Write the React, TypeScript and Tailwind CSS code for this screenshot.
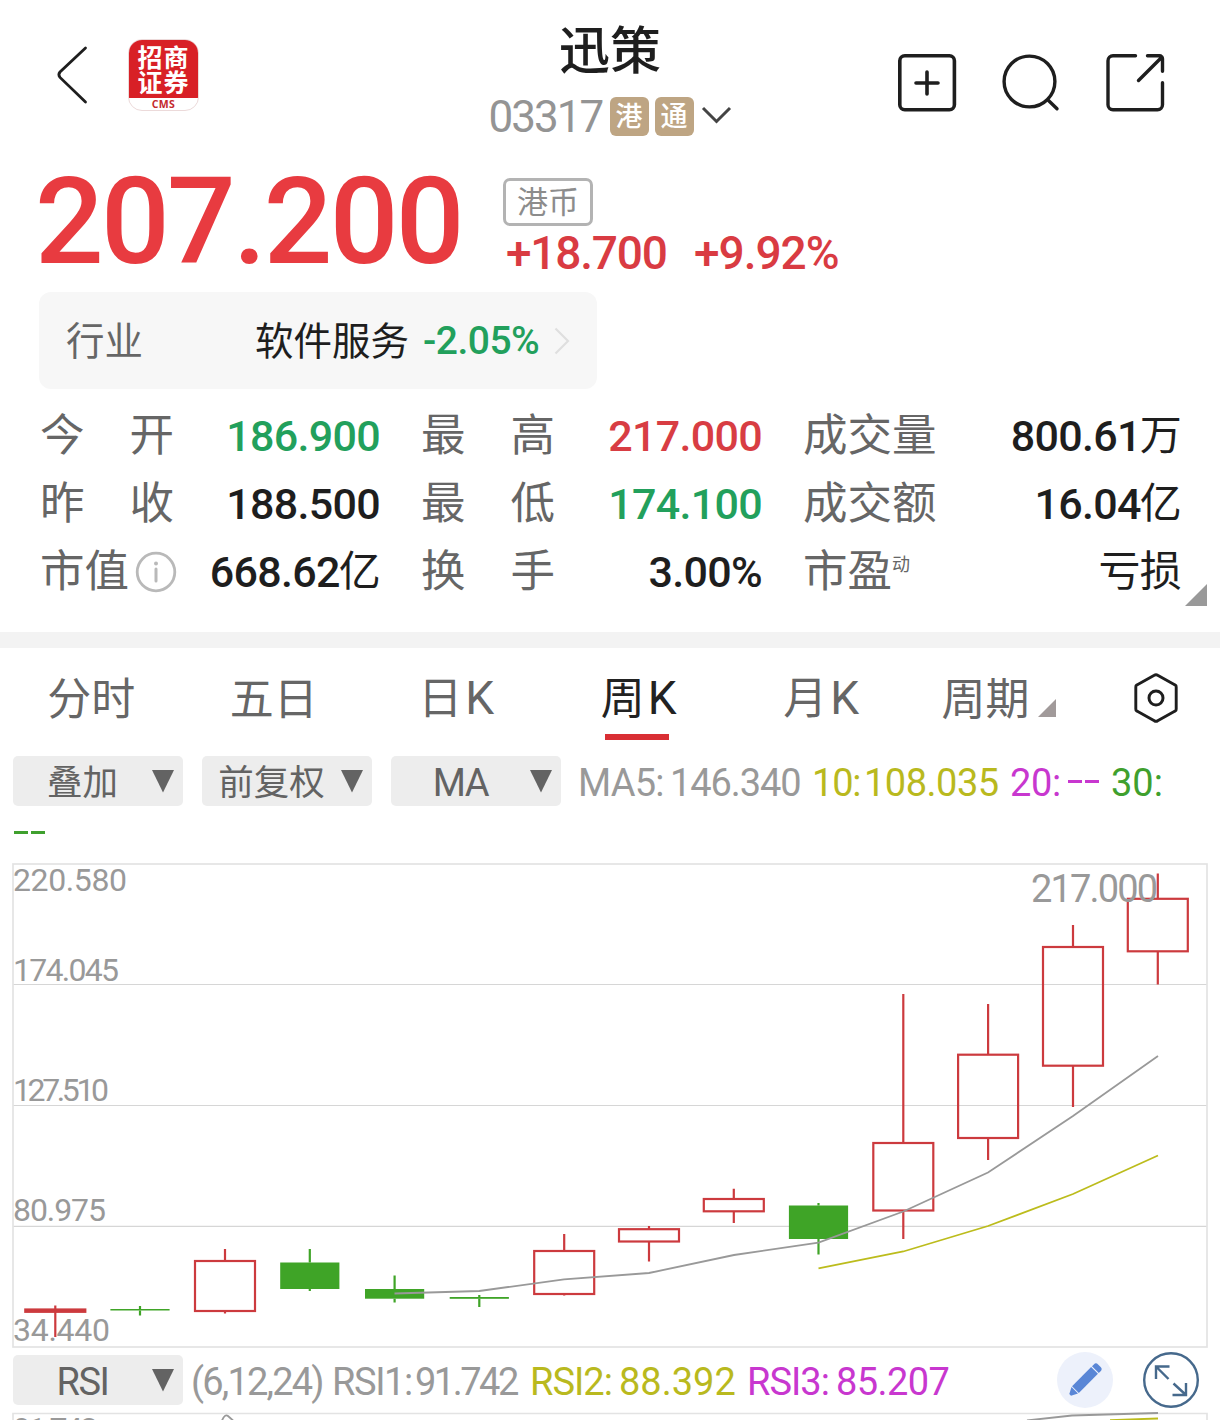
import type { ReactNode } from "react";

type Tone = "up" | "down" | "plain";

type Stat = {
  label: string;
  value: string;
  unit?: string;
  tone: Tone;
  spread?: boolean;
  info?: boolean;
  sup?: string;
};

type Candle = {
  x: number;
  high: number;
  top: number;
  bottom: number;
  low: number;
  up: boolean;
};

const stats: Stat[] = [
  { label: "今开", value: "186.900", tone: "down", spread: true },
  { label: "最高", value: "217.000", tone: "up", spread: true },
  { label: "成交量", value: "800.61", unit: "万", tone: "plain" },
  { label: "昨收", value: "188.500", tone: "plain", spread: true },
  { label: "最低", value: "174.100", tone: "down", spread: true },
  { label: "成交额", value: "16.04", unit: "亿", tone: "plain" },
  { label: "市值", value: "668.62", unit: "亿", tone: "plain", info: true },
  { label: "换手", value: "3.00%", tone: "plain", spread: true },
  { label: "市盈", value: "", unit: "亏损", tone: "plain", sup: "动" },
];

const toneClass: Record<Tone, string> = {
  up: "text-[#d83d43]",
  down: "text-[#22a05c]",
  plain: "text-[#1e1e1e]",
};

const tabs = ["分时", "五日", "日K", "周K", "月K"];

const candles: Candle[] = [
  { x: 55.3, high: 1305.5, top: 1309.5, bottom: 1311.8, low: 1337, up: true },
  { x: 140, high: 1306, top: 1309, bottom: 1310.5, low: 1315.5, up: false },
  { x: 225, high: 1249, top: 1261, bottom: 1311, low: 1313.5, up: true },
  { x: 309.8, high: 1249, top: 1262.5, bottom: 1289, low: 1291, up: false },
  { x: 394.6, high: 1275.5, top: 1289, bottom: 1298.7, low: 1302.5, up: false },
  { x: 479.3, high: 1295, top: 1297, bottom: 1298.8, low: 1307, up: false },
  { x: 564.2, high: 1234, top: 1251, bottom: 1294, low: 1295.5, up: true },
  { x: 649, high: 1226, top: 1229.2, bottom: 1241.5, low: 1261.5, up: true },
  { x: 733.8, high: 1188.7, top: 1199, bottom: 1211.3, low: 1223, up: true },
  { x: 818.5, high: 1203, top: 1205.5, bottom: 1239, low: 1254.5, up: false },
  { x: 903.3, high: 994, top: 1143, bottom: 1210.5, low: 1239, up: true },
  { x: 988.1, high: 1004, top: 1054.7, bottom: 1138, low: 1160, up: true },
  { x: 1073, high: 925, top: 947, bottom: 1065.7, low: 1107, up: true },
  { x: 1157.8, high: 873.5, top: 898.8, bottom: 951.3, low: 984.5, up: true },
];

const ma5 =
  "394.5,1293.5 479.3,1291 564,1279.3 649,1273 734,1255 818.5,1242.7 903.3,1211.5 988,1172.5 1073,1116 1158,1056";
const ma10 = "818.5,1268.3 903.3,1251.5 988,1226 1073,1194 1158,1155.5";

const axis = [
  { label: "220.580", y: 891, width: 114 },
  { label: "174.045", y: 981, width: 106 },
  { label: "127.510", y: 1101, width: 96 },
  { label: "80.975", y: 1221, width: 93 },
  { label: "34.440", y: 1341, width: 97 },
];

function BackIcon() {
  return (
    <svg width="34" height="62" viewBox="55 44 34 62" fill="none">
      <path
        d="M85.5 48 60 72q-2.2 2.7 0 5.4L85.5 102"
        stroke="#1e1e1e"
        strokeWidth="2.8"
        strokeLinecap="round"
      />
    </svg>
  );
}

function BrokerLogo() {
  return (
    <div className="flex h-[72px] w-[71px] flex-col overflow-hidden rounded-[14px] border border-[#ecdada] bg-white">
      <div className="flex h-[58px] flex-col items-center justify-center bg-[#d82026] font-['Noto_Sans_CJK_SC',sans-serif] text-[25px] leading-[25px] font-bold tracking-[1px] text-white">
        <span className="h-[25px]">招商</span>
        <span className="h-[25px]">证券</span>
      </div>
      <div className="text-center font-['Open_Sans',sans-serif] text-[10.5px] leading-[12px] font-bold tracking-[0.3px] text-[#c42a2e]">
        CMS
      </div>
    </div>
  );
}

function AddIcon() {
  return (
    <svg width="60" height="60" viewBox="897 53 60 60" fill="none" stroke="#1e1e1e">
      <rect x="899.8" y="55.8" width="54.6" height="54" rx="5" strokeWidth="3.6" />
      <path d="M916 83h22M927 72v22" strokeWidth="3.6" strokeLinecap="round" />
    </svg>
  );
}

function SearchIcon() {
  return (
    <svg width="60" height="60" viewBox="1001 53 60 60" fill="none" stroke="#1e1e1e">
      <circle cx="1029.5" cy="81.5" r="25.4" strokeWidth="3.4" />
      <path d="m1048.5 100.5 8.5 8.2" strokeWidth="3.4" strokeLinecap="round" />
    </svg>
  );
}

function ShareIcon() {
  return (
    <svg
      width="60"
      height="60"
      viewBox="1105 53 60 60"
      fill="none"
      stroke="#1e1e1e"
      strokeWidth="3.4"
      strokeLinecap="round"
    >
      <path d="M1135.5 55.8h-22.5a5 5 0 0 0-5 5v44a5 5 0 0 0 5 5h44.5a5 5 0 0 0 5-5v-22" />
      <path d="M1147.5 55.8h12a3 3 0 0 1 3 3v12.5M1162 57l-23.5 23.5" />
    </svg>
  );
}

function Hexagon() {
  return (
    <svg width="48" height="52" viewBox="0 0 48 52" fill="none" stroke="#1e1e1e">
      <path
        d="M22.3 3.3 4.9 12.9a2 2 0 0 0-1.1 2v22.2a2 2 0 0 0 1.1 2l17.4 9.6a3 3 0 0 0 3.4 0l17.4-9.6a2 2 0 0 0 1.1-2V14.9a2 2 0 0 0-1.1-2L25.7 3.3a3 3 0 0 0-3.4 0Z"
        strokeWidth="2.9"
      />
      <circle cx="24" cy="26" r="7" strokeWidth="3" />
    </svg>
  );
}

function InfoIcon() {
  return (
    <svg width="42" height="42" viewBox="0 0 42 42" fill="none" stroke="#b9b9b9">
      <circle cx="21" cy="21" r="18.8" strokeWidth="2.8" />
      <path d="M21 18v12" strokeWidth="3" strokeLinecap="round" />
      <circle cx="21" cy="12.5" r="2" fill="#b9b9b9" stroke="none" />
    </svg>
  );
}

function DownArrow() {
  return (
    <svg width="22" height="23" viewBox="0 0 22 23">
      <path d="M0 0h22L11 22.5Z" fill="#636363" />
    </svg>
  );
}

function Corner({ className, fill }: { className: string; fill: string }) {
  return (
    <svg className={className} viewBox="0 0 20 20" preserveAspectRatio="none">
      <path d="M20 0v20H0Z" fill={fill} />
    </svg>
  );
}

function PencilIcon() {
  return (
    <svg width="56" height="56" viewBox="0 0 56 56">
      <circle cx="28" cy="28" r="28" fill="#edf1fb" />
      <g transform="translate(27.500 28.500) rotate(45)" fill="#5986d6">
        <path d="M-4.800-18a3 3 0 0 1 3-3h3.600a3 3 0 0 1 3 3v2.600h-9.600Z" />
        <path d="M-4.800-14.200h9.600v27h-9.600Z" />
        <path d="M-4.600 13.800h9.200L1.200 20.300h-2.400Z" />
      </g>
    </svg>
  );
}

function ExpandIcon() {
  return (
    <svg width="56" height="56" viewBox="0 0 56 56" fill="none" stroke="#46698c" strokeWidth="2.4">
      <circle cx="28" cy="28" r="26.8" />
      <path d="M26.5 14.5H13V27M13 14.5l12.500 12.500M30.500 31.500 43 43M43 31v12H29.500" />
    </svg>
  );
}

function Chip({ children }: { children: ReactNode }) {
  return (
    <button
      type="button"
      className="flex h-[50px] w-[170px] shrink-0 items-center rounded-[5px] bg-[#ededed] text-[#636363]"
    >
      <span className="w-[139px] pt-[4px] text-center">{children}</span>
      <DownArrow />
    </button>
  );
}

function CandleShape({ x, high, top, bottom, low, up }: Candle) {
  const color = up ? "#cc3a3e" : "#3fa427";
  // a hollow body thinner than its own outline is drawn solid
  const solid = bottom - top < 3;
  return (
    <g stroke={color} strokeWidth="2.2">
      <path d={`M${x} ${high}V${top}M${x} ${bottom}V${low}`} />
      {up ? (
        <rect x={x - 30} y={top} width="60" height={bottom - top} fill={solid ? color : "none"} />
      ) : (
        <rect x={x - 29.6} y={top} width="59.2" height={bottom - top} fill={color} stroke="none" />
      )}
    </g>
  );
}

function Header() {
  return (
    <header className="flex h-[150px] items-start justify-between pr-[55px] pl-[55px]">
      <div className="flex w-[300px] items-center gap-[39px] pt-[39px]">
        <BackIcon />
        <BrokerLogo />
      </div>
      <div className="flex flex-col items-center">
        <h1 className="mt-[22px] h-[60px] text-[51px] leading-[60px] font-medium text-[#1e1e1e]">
          迅策
        </h1>
        <div className="mt-[14px] flex h-[40px] items-center">
          <span className="w-[121px] pt-[2px] text-[44px] leading-[40px] tracking-[-2px] text-[#949494]">
            03317
          </span>
          <span className="flex h-[39px] w-[39px] items-center justify-center rounded-[6px] bg-[#bea583] pt-[2px] text-[27px] leading-[37px] font-medium text-white">
            港
          </span>
          <span className="ml-[6px] flex h-[39px] w-[39px] items-center justify-center rounded-[6px] bg-[#bea583] pt-[2px] text-[27px] leading-[37px] font-medium text-white">
            通
          </span>
          <svg className="ml-[7px]" width="31" height="20" viewBox="0 0 31 20" fill="none">
            <path d="m2 2 13.500 13.500L29 2" stroke="#444" strokeWidth="3" />
          </svg>
        </div>
      </div>
      <div className="flex w-[300px] justify-end gap-[44px] pt-[53px]">
        <AddIcon />
        <SearchIcon />
        <ShareIcon />
      </div>
    </header>
  );
}

function Quote() {
  return (
    <section className="flex h-[142px] pl-[35px]">
      <div className="w-[468px] pt-[1px] text-[121px] leading-[142px] font-medium tracking-[-2.800px] text-[#e83b40]">
        207.200
      </div>
      <div className="pt-[28px]">
        <div className="flex h-[48px] w-[90px] items-center justify-center rounded-[7px] border-[3px] border-[#b3b3b3] pt-[2px] text-[31px] leading-[40px] text-[#8c8c8c]">
          港币
        </div>
        <div className="flex h-[54px] items-center pl-[3px] text-[46px] leading-[54px] font-medium tracking-[-1.200px] text-[#d93b42]">
          <span className="w-[188px]">+18.700</span>
          <span className="tracking-[-1px]">+9.92%</span>
        </div>
      </div>
    </section>
  );
}

function Industry() {
  return (
    <section className="ml-[39px] flex h-[97px] w-[558px] items-center rounded-[12px] bg-[#f7f7f7] pl-[27px] text-[38.5px]">
      <span className="w-[189px] pt-[2px] text-[#666]">行业</span>
      <span className="w-[168px] pt-[2px] text-[#1e1e1e]">软件服务</span>
      <span className="w-[131px] pt-[1px] text-[39px] font-medium tracking-[-0.500px] text-[#22a05c]">
        -2.05%
      </span>
      <svg width="16" height="28" viewBox="0 0 16 28" fill="none">
        <path d="m1.500 1.500 12.500 12.500L1.500 26.500" stroke="#dfdfdf" strokeWidth="2.200" />
      </svg>
    </section>
  );
}

function Stats() {
  return (
    <section className="relative mt-[13px] h-[230px]">
      <div className="grid grid-cols-[340px_341px_378px] gap-x-[41px] pl-[40px]">
        {stats.map((stat) => (
          <div key={stat.label} className="flex h-[68px] items-center justify-between">
            <div
              className={`flex items-center text-[44.5px] leading-[68px] text-[#666] ${
                stat.spread ? "w-[134px] justify-between" : ""
              }`}
            >
              {stat.spread ? (
                stat.label.split("").map((char) => <span key={char}>{char}</span>)
              ) : (
                <span>{stat.label}</span>
              )}
              {stat.info && (
                <span className="ml-[6px]">
                  <InfoIcon />
                </span>
              )}
              {stat.sup && <span className="mb-[14px] text-[18px] leading-[20px]">{stat.sup}</span>}
            </div>
            <div
              className={`flex items-center text-[43px] leading-[68px] tracking-[-0.700px] ${
                toneClass[stat.tone]
              }`}
            >
              {stat.value && <span className="font-medium">{stat.value}</span>}
              {stat.unit && <span className="ml-[-1px] text-[42px]">{stat.unit}</span>}
            </div>
          </div>
        ))}
      </div>
      <Corner className="absolute top-[182px] right-[13px] h-[22px] w-[22px]" fill="#999" />
    </section>
  );
}

function Tabs() {
  return (
    <nav className="flex h-[108px] text-[44px] text-[#666]">
      {tabs.map((tab) => {
        const active = tab === "周K";
        const hasK = tab.endsWith("K");
        return (
          <button
            key={tab}
            type="button"
            className={`flex w-[182.5px] flex-col items-center ${active ? "text-[#222]" : ""}`}
          >
            <span className={`h-[70px] leading-[68px] ${hasK ? "mt-[16px]" : "mt-[17.500px]"}`}>
              {tab.replace("K", "")}
              {hasK && <span className="ml-[3px] text-[46px]">K</span>}
            </span>
            {active && <span className="-ml-[4px] h-[6px] w-[64px] bg-[#d92f34]" />}
          </button>
        );
      })}
      <button type="button" className="mt-[18px] ml-[29px] flex h-[68px] w-[190px] items-center">
        周期
        <Corner className="mt-[16px] ml-[8px] h-[18px] w-[18px]" fill="#a19a9a" />
      </button>
      <button type="button" className="mt-[24px] h-[52px]">
        <Hexagon />
      </button>
    </nav>
  );
}

function MaRow() {
  return (
    <section className="h-[100px] pl-[13px] text-[38px] leading-[50px]">
      <div className="flex h-[50px] items-center">
        <div className="flex gap-[19px] text-[35.5px]">
          <Chip>叠加</Chip>
          <Chip>前复权</Chip>
          <Chip>
            <span className="text-[38px] tracking-[-1.500px]">MA</span>
          </Chip>
        </div>
        <div className="ml-[17px] flex pt-[4px] whitespace-nowrap">
          <span className="w-[92px] tracking-[-0.800px] text-[#999]">MA5:</span>
          <span className="w-[142px] tracking-[-1.100px] text-[#999]">146.340</span>
          <span className="w-[52px] tracking-[-1.200px] text-[#b9b91e]">10:</span>
          <span className="w-[146px] tracking-[-0.500px] text-[#b9b91e]">108.035</span>
          <span className="w-[58px] tracking-[-0.300px] text-[#c837cf]">20:</span>
          <span className="flex w-[43px] items-center gap-[3px] pb-[4px]">
            <span className="h-[3px] w-[14px] bg-[#c837cf]" />
            <span className="h-[3px] w-[14px] bg-[#c837cf]" />
          </span>
          <span className="text-[#3fa02e]">30:</span>
        </div>
      </div>
      <div className="flex h-[50px] items-center gap-[3px] pt-[2px] pl-[1px]">
        <span className="h-[3px] w-[14px] bg-[#3fa02e]" />
        <span className="h-[3px] w-[14px] bg-[#3fa02e]" />
      </div>
    </section>
  );
}

function KLineChart() {
  return (
    <svg className="block" width="1220" height="499" viewBox="0 856 1220 499" fill="none">
      <path d="M13 984.500h1194M13 1105.500h1194M13 1226.300h1194" stroke="#d6d6d6" strokeWidth="1.200" />
      <rect x="13" y="864" width="1194" height="483" stroke="#e3e3e3" strokeWidth="1.700" />
      <g fill="#999" fontSize="32">
        {axis.map((tick) => (
          <text key={tick.label} x="13" y={tick.y} textLength={tick.width}>
            {tick.label}
          </text>
        ))}
      </g>
      {candles.map((candle) => (
        <CandleShape key={candle.x} {...candle} />
      ))}
      <polyline points={ma5} stroke="#999" strokeWidth="1.800" />
      <polyline points={ma10} stroke="#bcbc1c" strokeWidth="1.800" />
      <text x="1031" y="902" fill="#999" fontSize="38" textLength="127">
        217.000
      </text>
    </svg>
  );
}

function RsiRow() {
  return (
    <section className="flex h-[50px] items-center pl-[13px] text-[38px] leading-[50px] whitespace-nowrap">
      <Chip>
        <span className="tracking-[-1.500px]">RSI</span>
      </Chip>
      <div className="ml-[8px] flex pt-[4px] text-[#999]">
        <span className="w-[141px] tracking-[-1.800px]">(6,12,24)</span>
        <span className="w-[83px] tracking-[-1.400px]">RSI1:</span>
        <span className="w-[115px] tracking-[-2.500px]">91.742</span>
      </div>
      <div className="flex pt-[4px] text-[#b9b91e]">
        <span className="w-[89px] tracking-[-1px]">RSI2:</span>
        <span className="w-[128px]">88.392</span>
      </div>
      <div className="flex w-[310px] pt-[4px] text-[#c837cf]">
        <span className="w-[89px] tracking-[-1px]">RSI3:</span>
        <span className="tracking-[-0.600px]">85.207</span>
      </div>
      <div className="flex gap-[30px]">
        <PencilIcon />
        <ExpandIcon />
      </div>
    </section>
  );
}

function RsiChart() {
  return (
    <svg className="block" width="1220" height="15" viewBox="0 1405 1220 15" fill="none">
      <path d="M13 1420v-6.500h1194v6.500" stroke="#e3e3e3" strokeWidth="1.700" />
      <text x="13" y="1440" fill="#999" fontSize="32" textLength="85">
        91.742
      </text>
      <path d="M222 1420.500q3-7 6-4.500l5 4.500M1027 1420.500l45-5 86-2.500" stroke="#999" strokeWidth="1.800" />
      <path d="M1110 1420.200 1158 1418.500" stroke="#bcbc1c" strokeWidth="1.800" />
    </svg>
  );
}

export default function App() {
  return (
    <main className="h-[1420px] w-[1220px] overflow-hidden bg-white font-['Roboto','Noto_Sans_CJK_SC',sans-serif]">
      <Header />
      <Quote />
      <Industry />
      <Stats />
      <div className="h-[16px] bg-[#f3f3f3]" />
      <Tabs />
      <MaRow />
      <KLineChart />
      <RsiRow />
      <RsiChart />
    </main>
  );
}
